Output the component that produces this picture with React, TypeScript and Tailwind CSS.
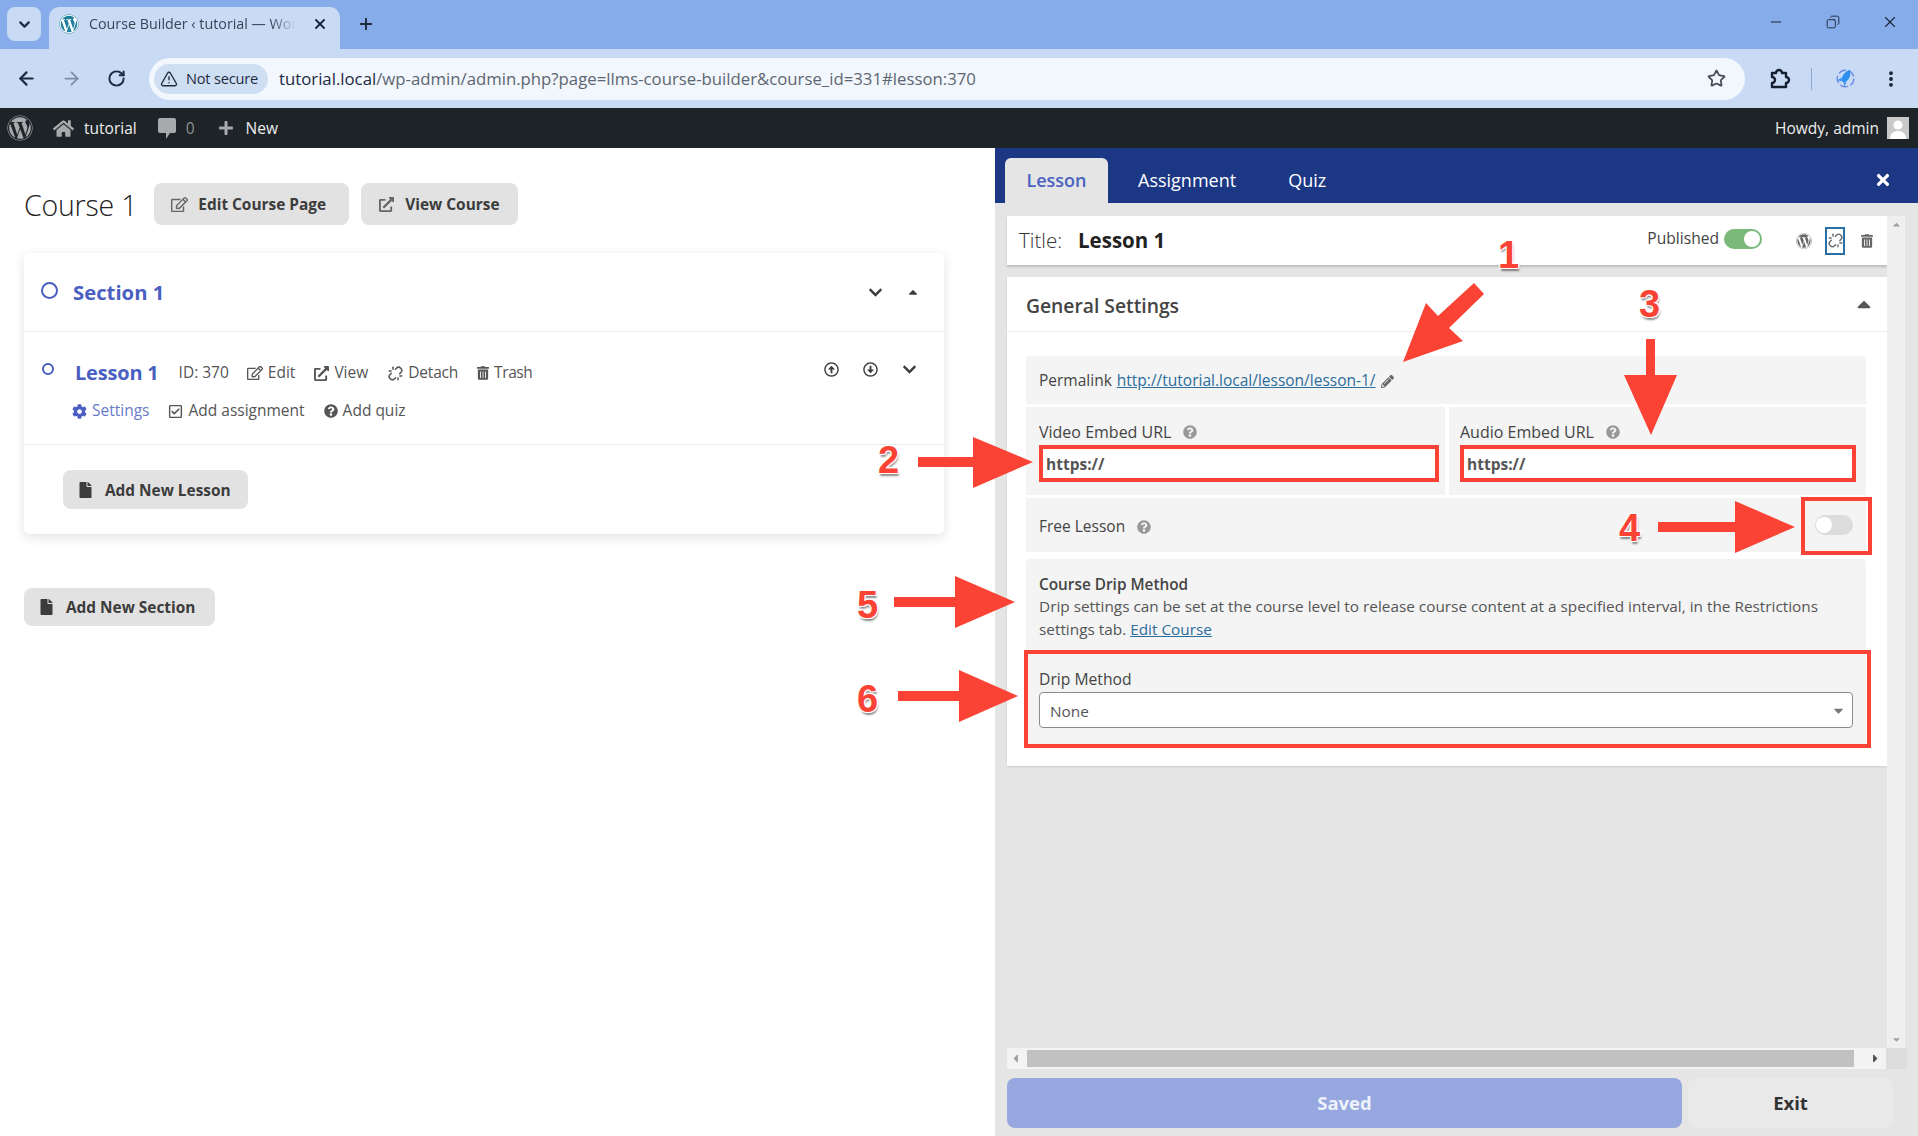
import React from 'react';
import { ArrowLeft, ArrowRight, RotateCw, Star, EllipsisVertical, TriangleAlert, Minus, Copy, X, Plus, ChevronDown, Unlink } from 'lucide-react';
import {
  FaWordpress, FaHome, FaPlus, FaRegEdit, FaExternalLinkAlt, FaTrashAlt, FaCog,
  FaRegCheckSquare, FaQuestionCircle, FaFile, FaChevronDown, FaCaretUp, FaCaretDown, FaCaretLeft, FaCaretRight,
  FaTimes, FaPencilAlt, FaRegArrowAltCircleUp, FaRegArrowAltCircleDown,
} from 'react-icons/fa';

function ChromeBar() {
  return (
    <>
      {/* tab strip */}
      <div className="h-[49px] bg-[#86ade9] flex items-end shrink-0 relative">
        <div className="w-[34px] h-[34px] ml-[7px] mb-[8px] rounded-lg bg-[#c9daf5] flex items-center justify-center">
          <ChevronDown className="w-[17px] h-[17px] text-[#1f2a3d]" strokeWidth={3} />
        </div>
        <div className="w-[291px] h-[42px] ml-[8px] bg-[#c9daf5] rounded-t-[10px] flex items-center pl-[10px] pr-[12px] pb-[8px]">
          <div className="w-[20px] h-[20px] rounded-full bg-white flex items-center justify-center shrink-0">
            <FaWordpress className="w-[20px] h-[20px] text-[#1f7f9c]" />
          </div>
          <div className="ml-[10px] w-[207px] text-[14.3px] text-[#3a4656] whitespace-nowrap [mask-image:linear-gradient(to_right,#000_88%,transparent)]">
            Course Builder ‹ tutorial — Wor
          </div>
          <X className="ml-auto w-[16px] h-[16px] text-[#1f2a3d]" strokeWidth={3} />
        </div>
        <Plus className="ml-[17px] mb-[16px] w-[18px] h-[18px] text-[#1f2a3d]" strokeWidth={2.5} />
        <div className="ml-auto flex items-center mb-[18px] text-[#1a2233]">
          <Minus className="w-[16px] h-[16px]" strokeWidth={1.5} />
          <Copy className="w-[14px] h-[14px] ml-[42px] -scale-x-100" strokeWidth={1.5} />
          <X className="w-[18px] h-[18px] ml-[41px] mr-[19px]" strokeWidth={1.5} />
        </div>
      </div>
      {/* toolbar */}
      <div className="h-[59px] bg-[#c9daf5] flex items-center shrink-0">
        <ArrowLeft className="ml-[16px] w-[21px] h-[21px] text-[#1d2a3f]" strokeWidth={2.5} />
        <ArrowRight className="ml-[24px] w-[21px] h-[21px] text-[#7d8ba0]" strokeWidth={2} />
        <RotateCw className="ml-[25px] w-[19px] h-[19px] text-[#1d2a3f]" strokeWidth={2.5} />
        <div className="ml-[23px] w-[1596px] h-[42px] rounded-full bg-[#f2f6fd] flex items-center pl-[5px] pr-[19px]">
          <div className="w-[114px] h-[30px] rounded-full bg-[#cfdff3] flex items-center pl-[6px] shrink-0">
            <TriangleAlert className="w-[18px] h-[18px] text-[#1d2a3f]" strokeWidth={1.8} />
            <span className="ml-[8px] text-[14.6px] text-[#1d2a3f] tracking-[-0.2px]">Not secure</span>
          </div>
          <div className="ml-[11px] text-[16.75px] text-[#5d6670] whitespace-nowrap">
            <span className="text-[#1d2a3f]">tutorial.local</span>/wp-admin/admin.php?page=llms-course-builder&amp;course_id=331#lesson:370
          </div>
          <Star className="ml-auto w-[19px] h-[19px] text-[#444c56]" strokeWidth={2.2} />
        </div>
        <svg viewBox="0 0 24 24" fill="none" stroke="#14202f" strokeWidth="2.4" strokeLinejoin="round" className="ml-[22px] w-[24px] h-[24px]">
          <path d="M5 6H9a3 3 0 0 1 6 0H19V10a3 3 0 0 1 0 6V20H5V16a3 3 0 0 0 0-6Z" />
        </svg>
        <div className="ml-[20px] w-[1px] h-[22px] bg-[#8ea9cc]" />
        <svg viewBox="0 0 24 24" className="ml-[23px] w-[21px] h-[23px]">
          <circle cx="12" cy="12" r="9.5" fill="none" stroke="#6b8be6" strokeWidth="1.6" strokeDasharray="9 3" />
          <path d="M17 2 C11 4 8 9 7 14 l3 3 C15 15 19 10 17 2z" fill="#2f8fee" />
          <path d="M7 11 l-4 3 4 1z M10 17 l1 4 2-5z" fill="#2f8fee" />
        </svg>
        <EllipsisVertical className="ml-[25px] w-[20px] h-[20px] text-[#14202f]" strokeWidth={2.6} />
      </div>
    </>
  );
}

function AdminBar() {
  return (
    <div className="h-[40px] bg-[#1d2327] flex items-center text-[15.5px] text-[#eeeeee] shrink-0">
      <FaWordpress className="ml-[7px] w-[26px] h-[26px] text-[#a7aaad]" />
      <FaHome className="ml-[20px] w-[21px] h-[21px] text-[#a7aaad]" />
      <span className="ml-[10px] pt-[1px]">tutorial</span>
      <svg viewBox="0 0 18 22" className="ml-[21px] w-[18px] h-[22px] fill-[#a7aaad]">
        <path d="M2 1h14a2 2 0 0 1 2 2v11a2 2 0 0 1-2 2h-4l-4 6v-6H2a2 2 0 0 1-2-2V3a2 2 0 0 1 2-2z" />
      </svg>
      <span className="ml-[10px] pt-[1px] text-[#8c8f94]">0</span>
      <FaPlus className="ml-[23px] w-[16px] h-[16px] text-[#a7aaad]" />
      <span className="ml-[12px] pt-[1px]">New</span>
      <span className="ml-auto pt-[1px]">Howdy, admin</span>
      <div className="ml-[8px] mr-[9px] w-[22px] h-[22px] bg-[#c9c9c9] flex items-end justify-center overflow-hidden">
        <svg viewBox="0 0 22 22" className="w-[22px] h-[22px]">
          <circle cx="11" cy="8" r="4.5" fill="#fff" />
          <path d="M3 22c0-6 4-8 8-8s8 2 8 8z" fill="#fff" />
        </svg>
      </div>
    </div>
  );
}

function GrayButton({ icon, label, className }: { icon: React.ReactNode; label: string; className: string }) {
  return (
    <div className={`bg-[#e2e2e2] rounded-lg flex items-center font-bold text-[15.4px] text-[#3c3c3c] ${className}`}>
      {icon}
      <span className="pt-[2px]">{label}</span>
    </div>
  );
}

function LessonAction({ icon, label, className = '' }: { icon: React.ReactNode; label: string; className?: string }) {
  return (
    <span className={`flex items-center gap-[5px] ${className}`}>
      {icon}
      {label}
    </span>
  );
}

function LeftPane() {
  return (
    <div className="w-[995px] bg-white shrink-0 pl-[24px] pt-[35px]">
      <div className="flex items-center h-[42px]">
        <h1 className="text-[28.5px] text-[#222] font-light tracking-[-0.2px] pt-[2px]">Course 1</h1>
        <GrayButton
          className="ml-[17px] w-[195px] h-[42px] pl-[17px] gap-[10px]"
          icon={<FaRegEdit className="w-[17px] h-[17px] text-[#666]" />}
          label="Edit Course Page"
        />
        <GrayButton
          className="ml-[12px] w-[157px] h-[42px] pl-[18px] gap-[11px]"
          icon={<FaExternalLinkAlt className="w-[15px] h-[15px] text-[#666]" />}
          label="View Course"
        />
      </div>

      <div className="mt-[28px] w-[920px] h-[281px] rounded-md bg-white shadow-[0_3px_12px_rgba(0,0,0,0.12)]">
        {/* section */}
        <div className="h-[79px] border-b border-[#ececec] flex items-center pl-[17px] pr-[24px]">
          <div className="w-[17px] h-[17px] rounded-full border-2 border-[#4a5fc1] -mt-[3px]" />
          <span className="ml-[15px] pt-[1px] text-[20.3px] font-bold text-[#4a5fc1]">Section 1</span>
          <FaChevronDown className="ml-auto w-[15px] h-[15px] text-[#3c3c3c]" />
          <FaCaretUp className="ml-[23px] w-[14px] h-[14px] text-[#3c3c3c]" />
        </div>
        {/* lesson */}
        <div className="h-[113px] border-b border-[#ececec] pl-[18px] pr-[27px] pt-[25px] text-[15.5px] text-[#555]">
          <div className="flex items-center h-[32px]">
            <div className="w-[12px] h-[12px] rounded-full border-2 border-[#4a5fc1] -mt-[9px]" />
            <span className="ml-[21px] text-[20px] font-bold text-[#4a5fc1] tracking-[-0.2px]">Lesson 1</span>
            <span className="ml-[20px]">ID: 370</span>
            <LessonAction className="ml-[18px]" icon={<FaRegEdit className="w-[16px] h-[16px]" />} label="Edit" />
            <LessonAction className="ml-[19px]" icon={<FaExternalLinkAlt className="w-[15px] h-[15px]" />} label="View" />
            <LessonAction className="ml-[20px] gap-[4px] tracking-[-0.2px]" icon={<Unlink className="w-[15px] h-[15px]" strokeWidth={2.4} />} label="Detach" />
            <LessonAction className="ml-[19px] tracking-[-0.4px]" icon={<FaTrashAlt className="w-[12px] h-[14px]" />} label="Trash" />
            <div className="ml-auto flex items-center -mt-[8px] text-[#3c3c3c]">
              <FaRegArrowAltCircleUp className="w-[15px] h-[15px]" />
              <FaRegArrowAltCircleDown className="ml-[24px] w-[15px] h-[15px]" />
              <FaChevronDown className="ml-[24px] w-[15px] h-[15px]" />
            </div>
          </div>
          <div className="flex items-center h-[24px] mt-[10px] ml-[30px]">
            <LessonAction className="text-[#6a7bc9]" icon={<FaCog className="w-[15px] h-[15px] text-[#4a5fc1]" />} label="Settings" />
            <LessonAction className="ml-[19px]" icon={<FaRegCheckSquare className="w-[15px] h-[15px]" />} label="Add assignment" />
            <LessonAction className="ml-[19px]" icon={<FaQuestionCircle className="w-[14px] h-[14px]" />} label="Add quiz" />
          </div>
        </div>
        <GrayButton
          className="ml-[39px] mt-[25px] w-[185px] h-[39px] pl-[16px] gap-[13px]"
          icon={<FaFile className="w-[13px] h-[16px] text-[#3c3c3c]" />}
          label="Add New Lesson"
        />
      </div>

      <GrayButton
        className="mt-[54px] w-[191px] h-[38px] pl-[16px] gap-[13px]"
        icon={<FaFile className="w-[13px] h-[16px] text-[#3c3c3c]" />}
        label="Add New Section"
      />
    </div>
  );
}

function HelpIcon({ className = '' }: { className?: string }) {
  return <FaQuestionCircle className={`w-[14px] h-[14px] text-[#999] ${className}`} />;
}

function Switch({ on }: { on?: boolean }) {
  return (
    <div className={`w-[38px] h-[20px] rounded-full flex items-center ${on ? 'bg-[#7ab97a] justify-end' : 'bg-[#dcdcdc]'}`}>
      <div className={`w-[16px] h-[16px] rounded-full bg-white ${on ? 'mr-[2px]' : 'ml-[1px]'}`} />
    </div>
  );
}

function EmbedField({ label, className }: { label: string; className: string }) {
  return (
    <div className={`h-[88px] bg-[#f4f4f4] ${className}`}>
      <div className="flex items-center h-[20px] mt-[15px] mb-[3px] text-[16px] font-medium text-[#444]">
        {label}
        <HelpIcon className="ml-[12px]" />
      </div>
      <div className="h-[37px] border-[4px] border-[#fb4335] bg-white flex items-center pl-[3px] pt-[3px] text-[15.5px] font-bold text-[#555]">
        https://
      </div>
    </div>
  );
}

function RightPane() {
  return (
    <div className="flex-1 bg-[#e5e5e5] flex flex-col min-w-0">
      {/* tabs */}
      <div className="h-[55px] bg-[#1c3784] flex items-end pl-[10px] pr-[27px] shrink-0 text-[18px] text-white">
        <div className="w-[103px] h-[45px] bg-[#e5e5e5] rounded-t-md flex items-center justify-center font-semibold text-[#4a62c0]">Lesson</div>
        <span className="ml-[30px] h-[45px] flex items-center">Assignment</span>
        <span className="ml-[52px] h-[45px] flex items-center">Quiz</span>
        <FaTimes className="ml-auto mb-[14px] w-[16px] h-[18px]" />
      </div>

      <div className="flex flex-1 min-h-0 pt-[13px] pl-[12px]">
        <div className="w-[880px] shrink-0">
          {/* title bar */}
          <div className="h-[49px] bg-white shadow-[0_2px_2px_rgba(0,0,0,0.18)] flex items-center pl-[12px] pr-[14px]">
            <span className="text-[20.5px] text-[#333] font-light">Title:</span>
            <span className="ml-[16px] text-[20.5px] font-bold text-[#222]">Lesson 1</span>
            <span className="ml-auto text-[15.6px] text-[#444] -mt-[4px]">Published</span>
            <div className="ml-[5px] -mt-[3px]"><Switch on /></div>
            <FaWordpress className="ml-[34px] w-[16px] h-[16px] text-[#666]" />
            <div className="ml-[13px] w-[20px] h-[28px] border-2 border-[#2a6ea6] flex items-center justify-center">
              <Unlink className="w-[15px] h-[15px] text-[#666]" strokeWidth={2.2} />
            </div>
            <FaTrashAlt className="ml-[16px] w-[12px] h-[14px] text-[#666]" />
          </div>

          {/* settings card */}
          <div className="mt-[12px] h-[489px] bg-white shadow-[0_1px_2px_rgba(0,0,0,0.1)]">
            <div className="h-[55px] border-b border-[#eeeeee] flex items-center pl-[19px] pr-[12px] text-[19.3px] font-semibold text-[#444]">
              <span className="pt-[4px]">General Settings</span>
              <FaCaretUp className="ml-auto w-[22px] h-[22px] text-[#555]" />
            </div>
            <div className="mt-[24px] ml-[19px] w-[840px] flex flex-col">
              <div className="h-[48px] bg-[#f4f4f4] rounded-t flex items-center pl-[13px] pt-[2px] text-[15.5px] text-[#444]">
                <span className="font-medium">Permalink</span>
                <span className="ml-[5px] text-[#2b6d9d] underline">http://tutorial.local/lesson/lesson-1/</span>
                <FaPencilAlt className="ml-[5px] w-[13px] h-[13px] text-[#666]" />
              </div>
              <div className="mt-[3px] flex gap-[4px]">
                <EmbedField label="Video Embed URL" className="w-[419px] pl-[13px] pr-[6px]" />
                <EmbedField label="Audio Embed URL" className="w-[417px] pl-[11px] pr-[10px]" />
              </div>
              <div className="mt-[3px] h-[54px] bg-[#f4f4f4] flex items-center pl-[13px] pr-[13px] text-[15.5px] font-medium text-[#444]">
                <span className="pt-[3px]">Free Lesson</span>
                <HelpIcon className="ml-[12px] mt-[3px]" />
                <div className="ml-auto"><Switch /></div>
              </div>
              <div className="mt-[7px] h-[189px] bg-[#f4f4f4] rounded-t pl-[13px] pr-[13px] pt-[15px] text-[15.35px] text-[#555]">
                <div className="font-semibold text-[#444] leading-[21px]">Course Drip Method</div>
                <div className="leading-[23px]">Drip settings can be set at the course level to release course content at a specified interval, in the Restrictions</div>
                <div className="leading-[23px]">settings tab. <span className="text-[#2b6d9d] underline">Edit Course</span></div>
                <div className="mt-[28px] text-[15.7px] font-medium text-[#444] leading-[21px]">Drip Method</div>
                <div className="mt-[2px] h-[36px] w-[814px] bg-white border border-[#8c8c8c] rounded flex items-center pl-[10px] pr-[6px] pt-[3px] text-[#555]">
                  None
                  <FaCaretDown className="ml-auto -mt-[3px] w-[15px] h-[15px] text-[#777]" />
                </div>
              </div>
            </div>
          </div>
        </div>
        {/* vertical scrollbar */}
        <div className="w-[18px] h-[833px] bg-[#efefef] flex flex-col items-center justify-between pt-[3px] pb-[4px] shrink-0">
          <FaCaretUp className="w-[11px] h-[11px] text-[#a0a0a0]" />
          <FaCaretDown className="w-[11px] h-[11px] text-[#a0a0a0]" />
        </div>
      </div>

      {/* horizontal scrollbar */}
      <div className="h-[21px] pl-[12px] flex shrink-0">
        <div className="w-[879px] bg-[#f3f3f3] flex items-center">
          <FaCaretLeft className="ml-[3px] w-[11px] h-[13px] text-[#a0a0a0]" />
          <div className="ml-[6px] w-[827px] h-[17px] bg-[#c1c1c1]" />
          <FaCaretRight className="ml-[16px] w-[11px] h-[13px] text-[#505050]" />
        </div>
        <div className="w-[21px] bg-[#dcdcdc]" />
      </div>

      {/* footer */}
      <div className="h-[67px] pl-[12px] pt-[9px] flex shrink-0">
        <div className="w-[675px] h-[50px] bg-[#96a8df] rounded-lg flex items-center justify-center text-[18.5px] font-bold text-[#eef2fb]">
          Saved
        </div>
        <div className="ml-[6px] w-[205px] h-[50px] bg-[#e9e9e9] rounded-lg flex items-center justify-center text-[18.5px] font-bold text-[#333]">
          Exit
        </div>
      </div>
    </div>
  );
}

// red callouts drawn over the screenshot
function Annotations() {
  const num = 'absolute font-["Liberation_Sans",sans-serif] font-bold text-[38px] leading-none text-[#fb4335] [text-shadow:1px_1px_0_#fff,-1px_-1px_0_#fff,1px_-1px_0_#fff,-1px_1px_0_#fff,1px_3px_2px_rgba(0,0,0,0.45)]';
  return (
    <div className="absolute inset-0 pointer-events-none">
      <svg className="absolute inset-0" width="1918" height="1136" viewBox="0 0 1918 1136" fill="#fb4335">
        <path d="M1403 362 L1426 303 L1438 316 L1474 283 L1484 294 L1449 328 L1463 341 Z" />
        <path d="M918 457 H973 V437 L1033 462 L973 488 V467 H918 Z" />
        <path d="M1646 339 H1655 V375 H1677 L1651 435 L1624 375 H1646 Z" />
        <path d="M1658 522 H1735 V501 L1795 527 L1735 553 V532 H1658 Z" />
        <path d="M894 597 H955 V576 L1015 602 L955 628 V607 H894 Z" />
        <path d="M898 691 H959 V670 L1018 696 L959 722 V701 H898 Z" />
      </svg>
      <div className="absolute left-[1801px] top-[497px] w-[71px] h-[58px] border-[4px] border-[#fb4335]" />
      <div className="absolute left-[1024px] top-[650px] w-[847px] h-[98px] border-[4px] border-[#fb4335]" />
      <span className={`${num} left-[1498px] top-[236px]`}>1</span>
      <span className={`${num} left-[878px] top-[441px]`}>2</span>
      <span className={`${num} left-[1639px] top-[285px]`}>3</span>
      <span className={`${num} left-[1619px] top-[509px]`}>4</span>
      <span className={`${num} left-[857px] top-[586px]`}>5</span>
      <span className={`${num} left-[857px] top-[680px]`}>6</span>
    </div>
  );
}

export default function App() {
  return (
    <div className="relative w-[1918px] h-[1136px] flex flex-col overflow-hidden font-['Open_Sans',sans-serif]">
      <ChromeBar />
      <AdminBar />
      <div className="flex flex-1 min-h-0">
        <LeftPane />
        <RightPane />
      </div>
      <Annotations />
    </div>
  );
}
